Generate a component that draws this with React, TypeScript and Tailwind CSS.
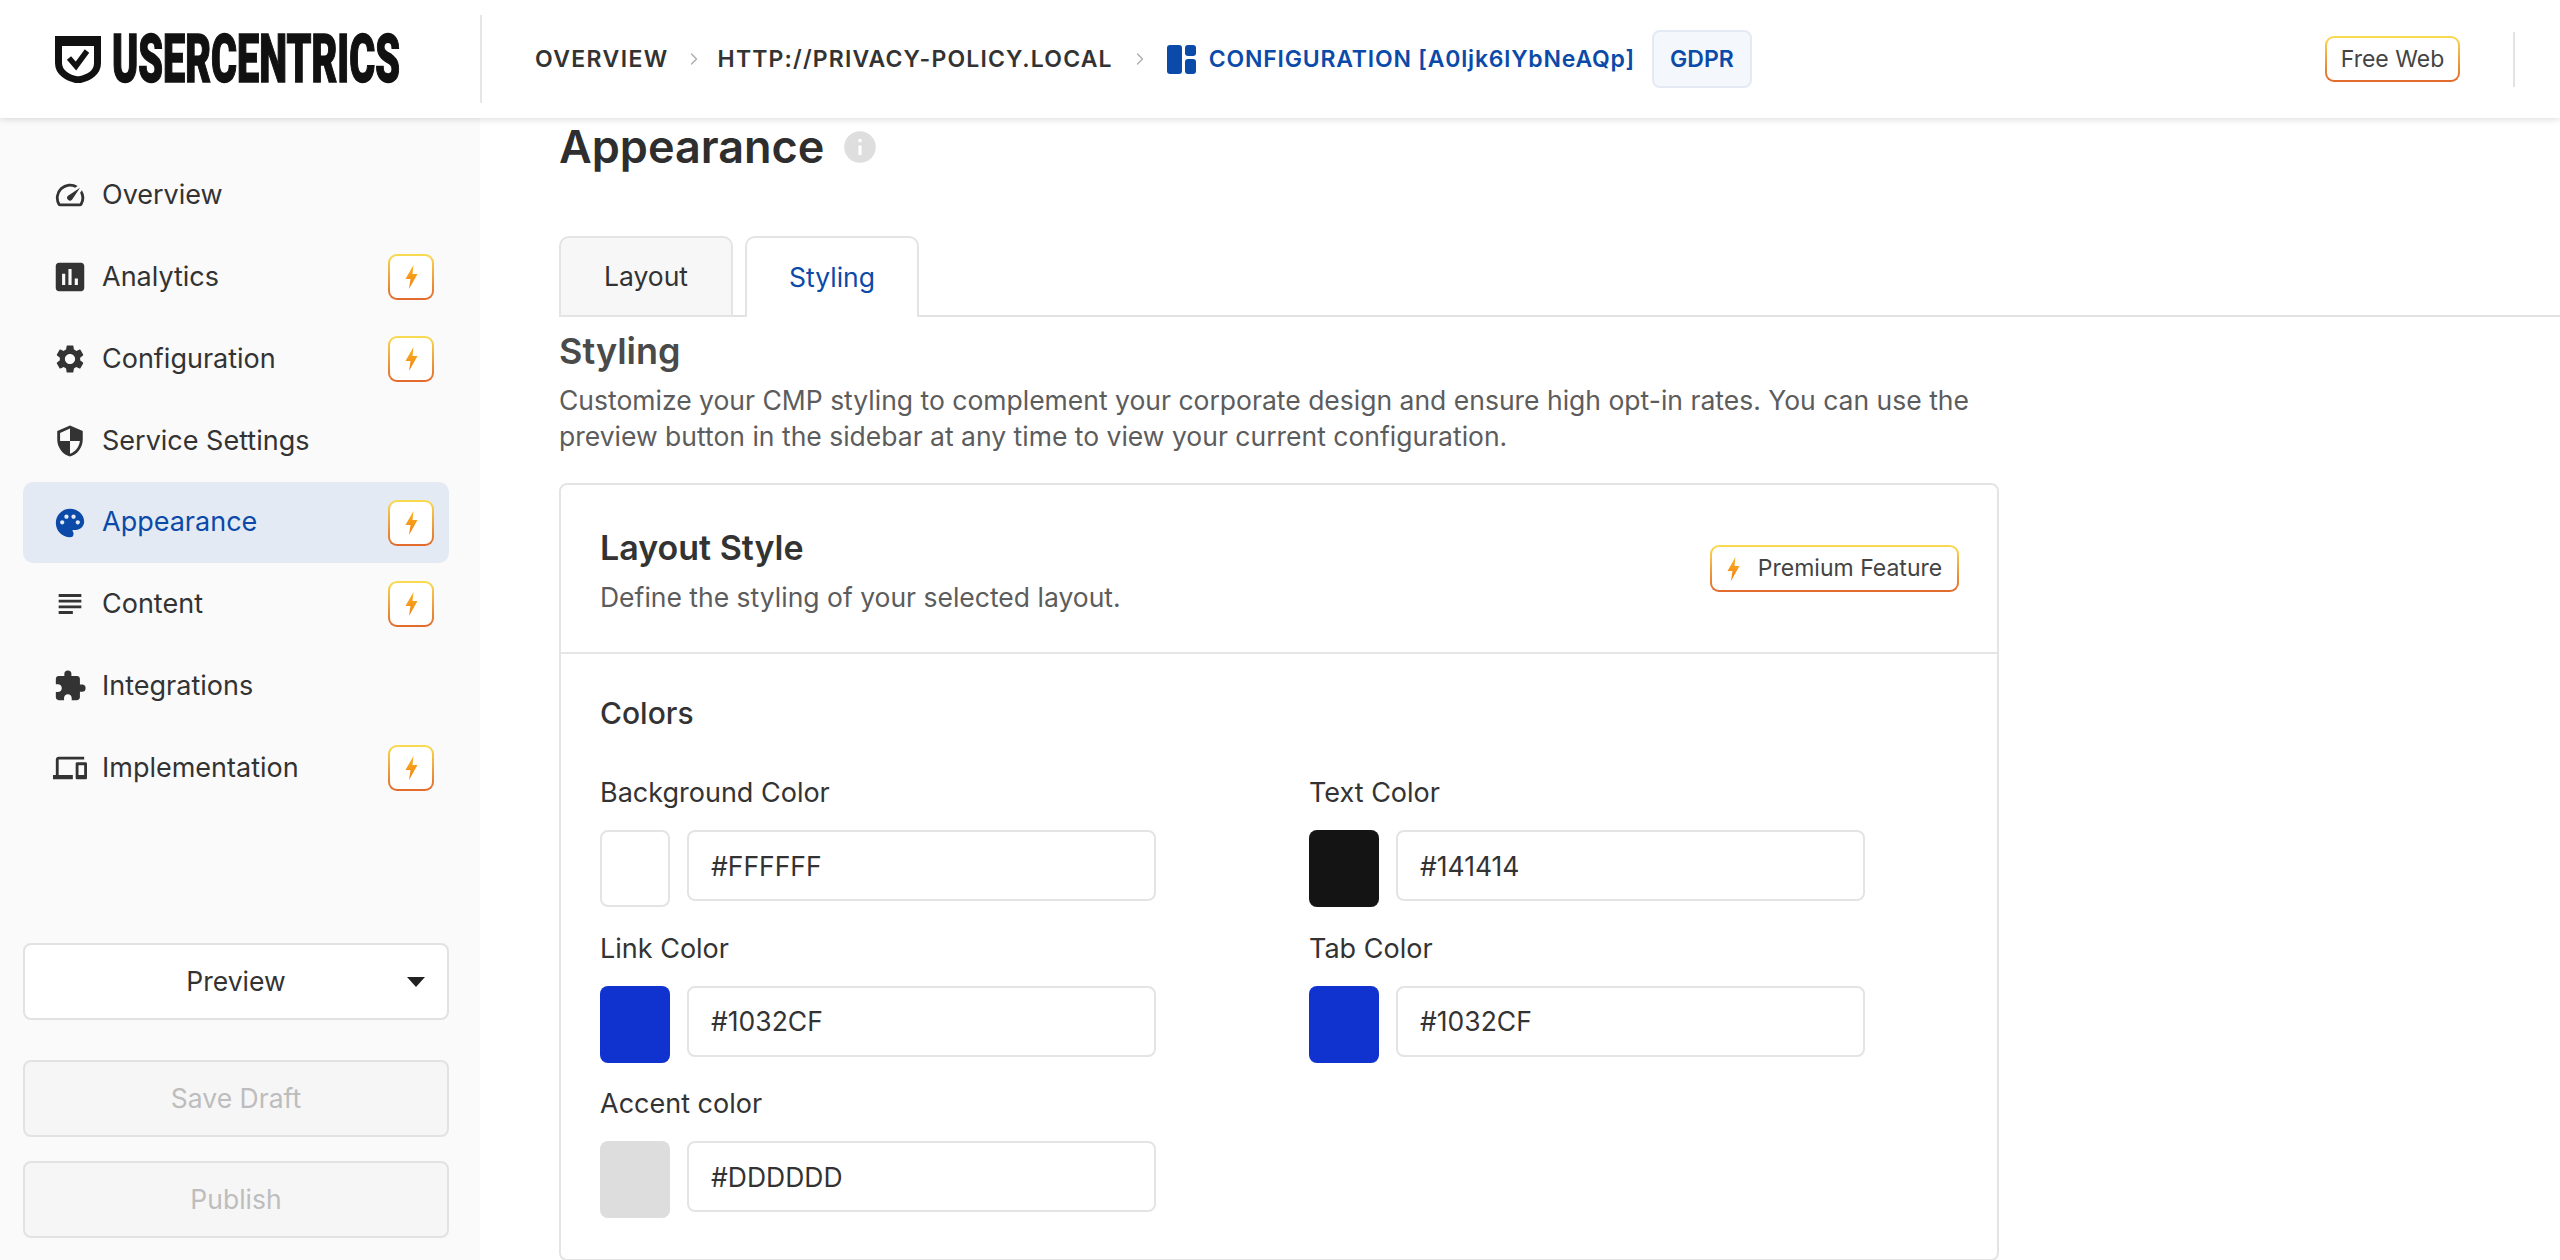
import type { ReactNode } from 'react';
import { ChevronRight } from 'lucide-react';
import {
  MdAssessment,
  MdDevices,
  MdExtension,
  MdInfo,
  MdOutlineSpeed,
  MdPalette,
  MdSecurity,
  MdSettings,
  MdSubject,
} from 'react-icons/md';

const nav = [
  { label: 'Overview', icon: MdOutlineSpeed, premium: false },
  { label: 'Analytics', icon: MdAssessment, premium: true, iconSize: 'w-[38px] h-[38px] -mx-[2px]' },
  { label: 'Configuration', icon: MdSettings, premium: true },
  { label: 'Service Settings', icon: MdSecurity, premium: false },
  { label: 'Appearance', icon: MdPalette, premium: true, active: true },
  { label: 'Content', icon: MdSubject, premium: true },
  { label: 'Integrations', icon: MdExtension, premium: false },
  { label: 'Implementation', icon: MdDevices, premium: true },
];

const colors = [
  { label: 'Background Color', value: '#FFFFFF', swatch: 'bg-white border-2 border-[#e4e4e4]' },
  { label: 'Text Color', value: '#141414', swatch: 'bg-[#141414]' },
  { label: 'Link Color', value: '#1032CF', swatch: 'bg-[#1032cf]' },
  { label: 'Tab Color', value: '#1032CF', swatch: 'bg-[#1032cf]' },
  { label: 'Accent color', value: '#DDDDDD', swatch: 'bg-[#dddddd]' },
];

function Bolt({ id }: { id: string }) {
  return (
    <svg viewBox="0 0 13 24" className="w-[13px] h-[24px] shrink-0">
      <defs>
        <linearGradient id={id} x1="0" y1="0" x2="0" y2="1">
          <stop offset="0" stopColor="#fbb321" />
          <stop offset="1" stopColor="#f08012" />
        </linearGradient>
      </defs>
      <path d="M8.5 0 0.5 14h5L4 24 12.5 9H7.5z" fill={`url(#${id})`} />
    </svg>
  );
}

function GradientBox({ className, children }: { className: string; children: ReactNode }) {
  return (
    <div className={`rounded-[9px] p-[2px] bg-[linear-gradient(180deg,#f9dc52,#e2692c)] ${className}`}>
      <div className="w-full h-full rounded-[7px] bg-white flex items-center justify-center">{children}</div>
    </div>
  );
}

function Logo() {
  return (
    <div className="flex items-center h-[47px] ml-[55px]">
      <svg viewBox="0 0 46 47" className="w-[46px] h-[47px] shrink-0">
        <path d="M3.5 3h39v24c0 9-8 15-19.500 17C12 42 3.500 36 3.500 27z" fill="none" stroke="#111" strokeWidth="7" />
        <path d="M0 0h46v10H0z" fill="#111" />
        <path d="M14 22l7 8 11-15" fill="none" stroke="#111" strokeWidth="5.500" />
      </svg>
      <div className="w-[288px] ml-[11px] shrink-0">
        <span className="block origin-left scale-x-[0.6] whitespace-nowrap font-[Roboto,sans-serif] font-black text-[66px] leading-[47px] text-[#111] [-webkit-text-stroke:1.5px_#111]">
          USERCENTRICS
        </span>
      </div>
    </div>
  );
}

function Header() {
  return (
    <header className="relative z-10 h-[118px] shrink-0 bg-white flex items-center shadow-[0_2px_6px_rgba(0,0,0,0.12)]">
      <div className="w-[482px] shrink-0 h-[88px] flex items-center border-r-2 border-[#e6e6e6]">
        <Logo />
      </div>
      <nav className="flex items-center ml-[53px] text-[23px] font-semibold tracking-[0.06em] text-[#333] uppercase whitespace-nowrap">
        <span>Overview</span>
        <ChevronRight className="w-[20px] h-[20px] ml-[15px] mr-[14px] text-[#aaa]" strokeWidth={1.5} />
        <span className="tracking-[0.05em]">http://privacy-policy.local</span>
        <ChevronRight className="w-[20px] h-[20px] mx-[17px] text-[#aaa]" strokeWidth={1.5} />
        <svg viewBox="0 0 29 29" className="w-[29px] h-[29px] mr-[13px]">
          <rect x="0" y="0" width="15" height="29" rx="3" fill="#0b4aa8" />
          <rect x="18" y="0" width="11" height="11" rx="3" fill="#0b4aa8" />
          <rect x="18" y="14" width="11" height="15" rx="3" fill="#0b4aa8" />
        </svg>
        <span className="text-[#0b4aa8] normal-case tracking-[0.035em]">CONFIGURATION [A0ljk6lYbNeAQp]</span>
        <span className="ml-[17px] w-[100px] h-[58px] flex items-center justify-center rounded-[8px] border-2 border-[#e3eaf3] bg-[#f4f8fc] text-[#0b4aa8] tracking-normal">
          GDPR
        </span>
      </nav>
      <div className="ml-auto flex items-center">
        <GradientBox className="w-[135px] h-[46px]">
          <span className="text-[23px] text-[#444] whitespace-nowrap">Free Web</span>
        </GradientBox>
        <div className="w-[2px] h-[55px] bg-[#e2e2e2] ml-[53px] mr-[45px]" />
      </div>
    </header>
  );
}

function Sidebar() {
  return (
    <aside className="w-[480px] shrink-0 bg-[#fafafa] flex flex-col pl-[23px] pr-[31px] pt-[36.5px] pb-[22px]">
      <ul className="flex flex-col">
        {nav.map(item => {
          const Icon = item.icon;
          return (
            <li
              key={item.label}
              className={`h-[81.8px] flex items-center pl-[30px] pr-[15px] rounded-[10px] ${item.active ? 'bg-[#e4eaf3] text-[#0b4aa8]' : 'text-[#333]'}`}
            >
              <Icon className={`${item.iconSize ?? 'w-[34px] h-[34px]'} shrink-0 ${item.active ? 'text-[#0b4aa8]' : 'text-[#333]'}`} />
              <span className="ml-[15px] text-[27px]">{item.label}</span>
              {item.premium && (
                <GradientBox className="ml-auto w-[46px] h-[46px]">
                  <Bolt id={`bolt-${item.label}`} />
                </GradientBox>
              )}
            </li>
          );
        })}
      </ul>
      <div className="mt-auto flex flex-col">
        <button className="relative h-[77px] rounded-[8px] border-2 border-[#e2e2e2] bg-white text-[26.5px] text-[#333]">
          Preview
          <span className="absolute right-[22px] top-[32px] w-0 h-0 border-x-[9px] border-x-transparent border-t-[10px] border-t-[#222]" />
        </button>
        <button className="h-[77px] mt-[40px] rounded-[8px] border-2 border-[#e2e2e2] bg-[#f6f6f6] text-[26.5px] text-[#bdbdbd]">
          Save Draft
        </button>
        <button className="h-[77px] mt-[24px] rounded-[8px] border-2 border-[#e2e2e2] bg-[#f6f6f6] text-[26.5px] text-[#bdbdbd]">
          Publish
        </button>
      </div>
    </aside>
  );
}

function ColorField({ label, value, swatch }: { label: string; value: string; swatch: string }) {
  return (
    <div className="h-[155.6px]">
      <div className="h-[36px] leading-[36px] text-[27px] text-[#333]">{label}</div>
      <div className="mt-[19px] flex items-start">
        <div className={`w-[70px] h-[77px] rounded-[8px] shrink-0 ${swatch}`} />
        <input
          readOnly
          value={value}
          className="ml-[17px] w-[469px] h-[71px] rounded-[8px] border-2 border-[#e4e4e4] bg-white px-[22px] text-[26.5px] text-[#333] outline-none"
        />
      </div>
    </div>
  );
}

export default function App() {
  return (
    <div className="w-[2560px] h-[1260px] overflow-hidden flex flex-col bg-white font-[Inter,sans-serif]">
      <Header />
      <div className="flex flex-1 min-h-0">
        <Sidebar />
        <main className="flex-1 min-w-0 overflow-hidden pt-[1px] pl-[79px]">
          <div className="flex items-center h-[56px]">
            <h1 className="text-[45px] leading-[56px] font-semibold text-[#2e2e2e]">Appearance</h1>
            <MdInfo className="ml-[17px] w-[38px] h-[38px] text-[#dedede]" />
          </div>

          {/* Tabs */}
          <div className="mt-[61px] h-[81px] flex items-stretch gap-[12px] border-b-2 border-[#e2e2e2]">
            <div className="w-[174px] h-[81px] flex items-center justify-center rounded-t-[10px] border-2 border-[#e4e4e4] bg-[#f7f7f7] text-[26.5px] text-[#333]">
              Layout
            </div>
            <div className="w-[174px] h-[81px] flex items-center justify-center rounded-t-[10px] border-2 border-b-0 border-[#e4e4e4] bg-white text-[26.5px] text-[#0b4aa8]">
              Styling
            </div>
          </div>

          <h2 className="mt-[12px] h-[44px] leading-[44px] text-[36px] font-semibold text-[#4a4a4a]">Styling</h2>
          <p className="mt-[9px] w-[1440px] text-[26.5px] leading-[36px] text-[#5c5c5c]">
            Customize your CMP styling to complement your corporate design and ensure high opt-in rates. You can use the preview button in the sidebar at any time to view your current configuration.
          </p>

          {/* Layout Style card */}
          <section className="mt-[29px] w-[1440px] rounded-[8px] border-2 border-[#e4e4e4] bg-white">
            <div className="h-[169px] pl-[39px] pr-[38px] flex items-center justify-between border-b-2 border-[#e6e6e6]">
              <div className="pt-[6px]">
                <h3 className="h-[40px] leading-[40px] text-[34px] font-semibold text-[#333]">Layout Style</h3>
                <p className="mt-[11px] h-[36px] leading-[36px] text-[26.5px] text-[#5c5c5c]">Define the styling of your selected layout.</p>
              </div>
              <GradientBox className="w-[249px] h-[47px]">
                <Bolt id="bolt-premium" />
                <span className="ml-[18px] text-[23px] text-[#444] whitespace-nowrap">Premium Feature</span>
              </GradientBox>
            </div>
            <div className="pl-[39px] pr-[38px] pt-[41px] h-[605px]">
              <h4 className="h-[36px] leading-[36px] text-[30px] font-medium text-[#333]">Colors</h4>
              <div className="mt-[44px] grid grid-cols-[709px_1fr]">
                {colors.map(c => (
                  <ColorField key={c.label} {...c} />
                ))}
              </div>
            </div>
          </section>
        </main>
      </div>
    </div>
  );
}
